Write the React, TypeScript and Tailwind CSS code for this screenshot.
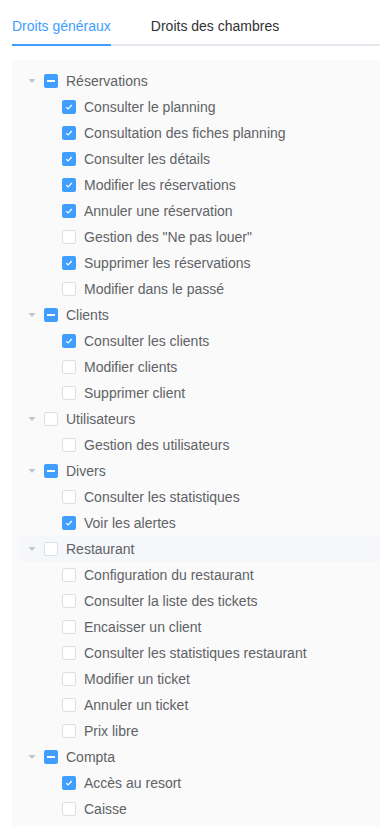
const groups = [
  {
    name: 'Réservations',
    state: 'partial',
    items: [
      { label: 'Consulter le planning', checked: true },
      { label: 'Consultation des fiches planning', checked: true },
      { label: 'Consulter les détails', checked: true },
      { label: 'Modifier les réservations', checked: true },
      { label: 'Annuler une réservation', checked: true },
      { label: 'Gestion des "Ne pas louer"', checked: false },
      { label: 'Supprimer les réservations', checked: true },
      { label: 'Modifier dans le passé', checked: false },
    ],
  },
  {
    name: 'Clients',
    state: 'partial',
    items: [
      { label: 'Consulter les clients', checked: true },
      { label: 'Modifier clients', checked: false },
      { label: 'Supprimer client', checked: false },
    ],
  },
  {
    name: 'Utilisateurs',
    state: 'none',
    items: [{ label: 'Gestion des utilisateurs', checked: false }],
  },
  {
    name: 'Divers',
    state: 'partial',
    items: [
      { label: 'Consulter les statistiques', checked: false },
      { label: 'Voir les alertes', checked: true },
    ],
  },
  {
    name: 'Restaurant',
    state: 'none',
    hover: true,
    items: [
      { label: 'Configuration du restaurant', checked: false },
      { label: 'Consulter la liste des tickets', checked: false },
      { label: 'Encaisser un client', checked: false },
      { label: 'Consulter les statistiques restaurant', checked: false },
      { label: 'Modifier un ticket', checked: false },
      { label: 'Annuler un ticket', checked: false },
      { label: 'Prix libre', checked: false },
    ],
  },
  {
    name: 'Compta',
    state: 'partial',
    items: [
      { label: 'Accès au resort', checked: true },
      { label: 'Caisse', checked: false },
    ],
  },
];

function Checkbox({ state }: { state: 'checked' | 'partial' | 'none' }) {
  if (state === 'none') {
    return <span className="w-[14px] h-[14px] shrink-0 rounded-[2px] border border-[#dcdfe6] bg-white mr-2" />;
  }
  return (
    <span className="w-[14px] h-[14px] shrink-0 rounded-[2px] bg-[#409eff] mr-2 flex items-center justify-center">
      {state === 'checked' ? (
        <svg width="14" height="14" viewBox="0 0 14 14">
          <path d="M4.2 7.1 L6.1 9 L9.8 5" fill="none" stroke="white" strokeWidth="1.2" />
        </svg>
      ) : (
        <span className="w-2 h-[2px] bg-white" />
      )}
    </span>
  );
}

function Caret() {
  return (
    <span className="w-6 h-full flex items-center justify-center shrink-0">
      <svg width="8" height="6" viewBox="0 0 8 6">
        <path d="M0.5 1 L7.5 1 L4 5 Z" fill="#c0c4cc" />
      </svg>
    </span>
  );
}

export default function App() {
  return (
    <div className="min-h-[826px] bg-white pl-3 pt-[6px] font-['Liberation_Sans',Arial,sans-serif]">
      <div className="flex h-10 border-b-2 border-[#e4e7ed] mb-[14px]">
        <div className="h-10 leading-10 text-sm text-[#409eff] border-b-2 border-[#409eff] -mb-[2px] mr-10">
          Droits généraux
        </div>
        <div className="h-10 leading-10 text-sm text-[#303133]">Droits des chambres</div>
      </div>

      <div className="bg-[#fafafa] pl-2 pt-2 pb-2">
        {groups.map((group) => (
          <div key={group.name}>
            <div className={`flex items-center h-[26px] text-sm text-[#606266] ${group.hover ? 'bg-[#f5f7fa]' : ''}`}>
              <Caret />
              <Checkbox state={group.state as 'partial' | 'none'} />
              <span>{group.name}</span>
            </div>
            {group.items.map((item) => (
              <div key={item.label} className="flex items-center h-[26px] pl-[42px] text-sm text-[#606266]">
                <Checkbox state={item.checked ? 'checked' : 'none'} />
                <span>{item.label}</span>
              </div>
            ))}
          </div>
        ))}
      </div>
    </div>
  );
}
